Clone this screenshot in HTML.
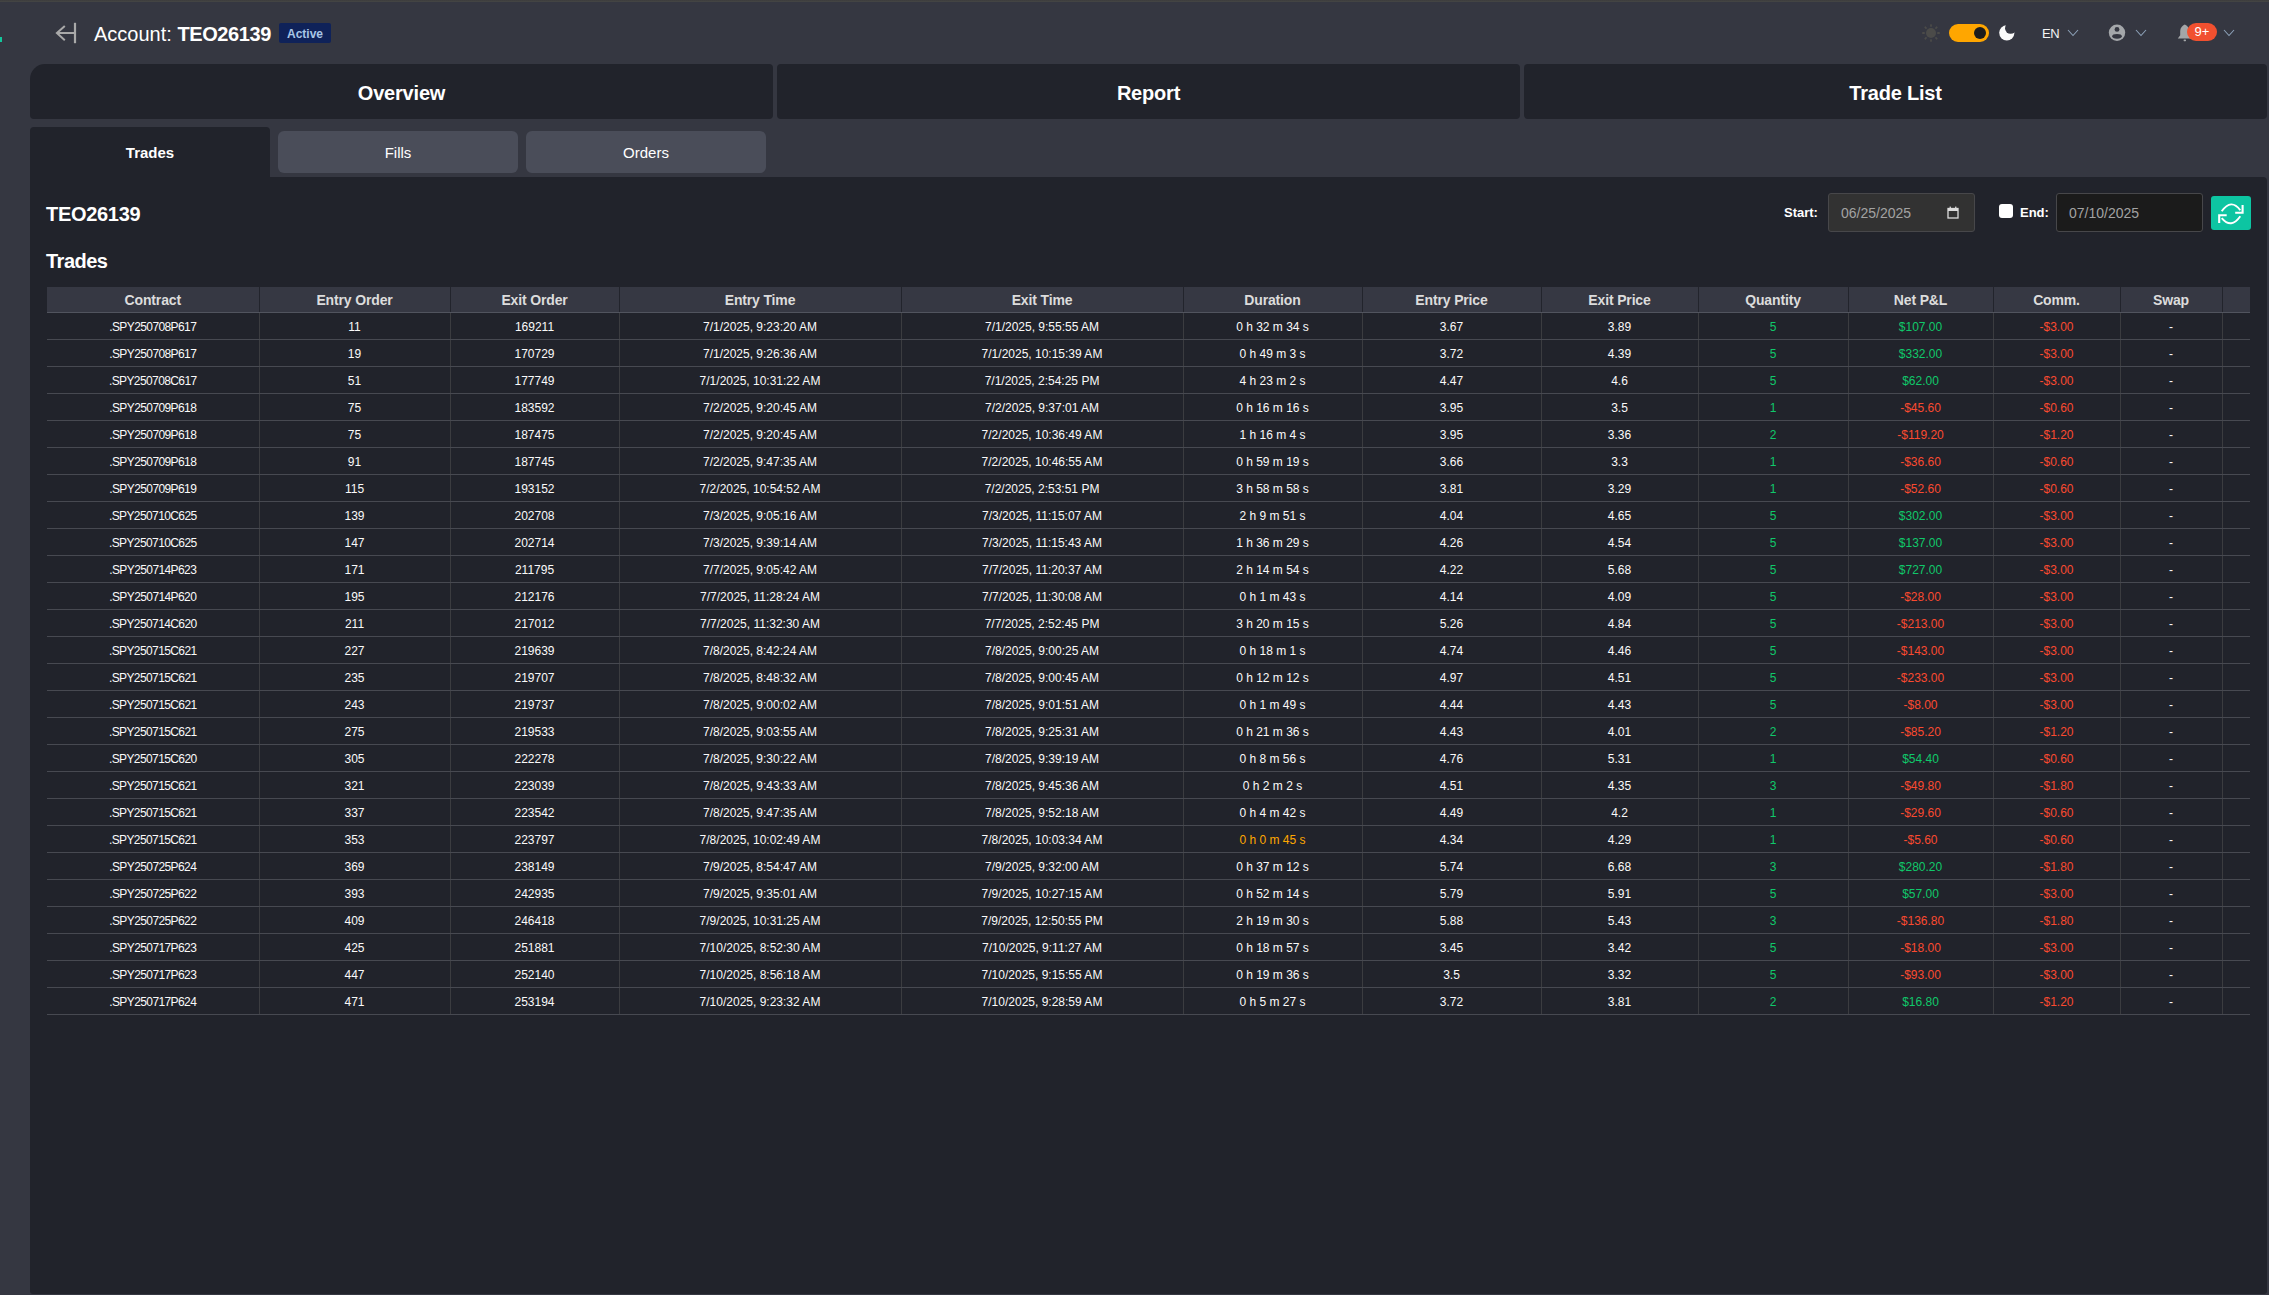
<!DOCTYPE html>
<html>
<head>
<meta charset="utf-8">
<style>
*{box-sizing:border-box;}
html,body{margin:0;padding:0;}
body{width:2269px;height:1295px;overflow:hidden;background:#353741;font-family:"Liberation Sans",sans-serif;color:#fff;position:relative;}
.abs{position:absolute;}
#topline{left:0;top:0;width:2269px;height:2px;background:linear-gradient(#3c3c3c,#454745);}
#greendot{left:0;top:37px;width:2px;height:5px;background:#12c79c;}
#back{left:50px;top:18px;width:30px;height:30px;}
#title{left:94px;top:22px;font-size:20px;line-height:24px;white-space:nowrap;}
#title b{font-weight:bold;letter-spacing:-0.4px;}
#badge{left:279px;top:23px;width:52px;height:20px;background:#0f2259;border-radius:2px;color:#a9c6e6;font-size:12px;font-weight:bold;line-height:20px;padding-top:1px;text-align:center;}
.tab{top:64px;height:55px;background:#21232b;border-radius:4px;font-size:20px;font-weight:bold;text-align:center;line-height:51px;padding-top:4px;letter-spacing:-0.2px;}
#t1{left:30px;width:743px;border-top-left-radius:15px;}
#t2{left:777px;width:743px;}
#t3{left:1524px;width:743px;}
#sub1{left:30px;top:127px;width:240px;height:60px;background:#21232b;border-radius:4px 4px 0 0;font-size:15px;font-weight:bold;text-align:center;line-height:50px;padding-top:1px;}
.sub{top:131px;width:240px;height:42px;background:#4a4d59;border-radius:6px;font-size:15px;text-align:center;line-height:42px;padding-top:1px;color:#fff;}
#sub2{left:278px;}
#sub3{left:526px;}
#content{left:30px;top:177px;width:2237px;height:1117px;background:#21232b;border-radius:0 4px 3px 3px;}
#acct{left:46px;top:202px;font-size:20px;font-weight:bold;line-height:24px;letter-spacing:-0.3px;}
#trh{left:46px;top:249px;font-size:20px;font-weight:bold;line-height:24px;letter-spacing:-0.5px;}
.lbl{font-size:13px;font-weight:bold;line-height:16px;}
#lstart{left:1784px;top:205px;}
#lend{left:2020px;top:205px;}
.inp{top:193px;width:147px;height:39px;border:1px solid #47474a;border-radius:3px;font-size:14px;color:#a2a2a2;line-height:39px;padding-left:12px;}
#in1{left:1828px;background:#323232;}
#in2{left:2056px;background:#1b1b1b;}
#cal{left:1947px;top:206px;width:12px;height:13px;}
#chk{left:1999px;top:204px;width:14px;height:14px;background:#fff;border-radius:3px;}
#refresh{left:2211px;top:196px;width:40px;height:34px;background:#0dc5a2;border-radius:3px;}
#rtline{display:none;}
table{position:absolute;left:47px;top:287px;border-collapse:collapse;table-layout:fixed;width:2203px;}
th{height:25px;background:#363843;color:#dcdcdc;font-size:14px;letter-spacing:-0.15px;font-weight:bold;text-align:center;padding:0;border-left:1px solid #22242c;border-bottom:1px solid #51545e;line-height:24px;padding-top:1px;}
th:first-child{border-left:none;}
td{height:27px;font-size:12px;text-align:center;padding:0;border-left:1px solid #3b3c40;border-bottom:1px solid #474951;color:#fafafa;line-height:24px;padding-top:2px;white-space:nowrap;}
td:first-child{border-left:none;}
td.c{letter-spacing:-0.6px;}
td.g{color:#10c86a;}
td.r{color:#fa4a30;}
td.o{color:#ffa800;}
/* header icons */
#sun{left:1921px;top:23px;width:20px;height:20px;}
#toggle{left:1949px;top:24px;width:40px;height:18px;background:#ffa600;border-radius:9px;}
#knob{left:1974px;top:27px;width:12px;height:12px;background:#1c1c1c;border-radius:50%;}
#moon{left:1998px;top:23px;width:18px;height:18px;}
#en{left:2042px;top:26px;font-size:13px;letter-spacing:-0.5px;line-height:16px;color:#f4f4f4;}
.chev{width:12px;height:8px;top:29px;}
#ch1{left:2067px;}
#ch2{left:2135px;}
#ch3{left:2223px;}
#user{left:2108px;top:24px;width:18px;height:18px;}
#bell{left:2176px;top:24px;width:16px;height:18px;}
#nbadge{left:2187px;top:23px;width:30px;height:18px;background:#f1502f;border-radius:9px;font-size:13px;line-height:18px;text-align:center;color:#fff;}
</style>
</head>
<body>
<div id="topline" class="abs"></div>
<div id="greendot" class="abs"></div>
<svg id="back" class="abs" viewBox="0 0 30 30"><path d="M14.8 8 L6.9 15.1 L14.8 22.2 M7 15.1 H24" fill="none" stroke="#a9a9a9" stroke-width="2"/><path d="M25 4.8 V25.2" stroke="#a9a9a9" stroke-width="2.2"/></svg>
<div id="title" class="abs">Account: <b>TEO26139</b></div>
<div id="badge" class="abs">Active</div>

<svg id="sun" class="abs" viewBox="0 0 20 20"><g fill="#4b4b49"><circle cx="10" cy="10" r="5"/><rect x="9.1" y="1.2" width="1.8" height="2.6" rx="0.5" transform="rotate(0 10 10)"/><rect x="9.1" y="1.2" width="1.8" height="2.6" rx="0.5" transform="rotate(45 10 10)"/><rect x="9.1" y="1.2" width="1.8" height="2.6" rx="0.5" transform="rotate(90 10 10)"/><rect x="9.1" y="1.2" width="1.8" height="2.6" rx="0.5" transform="rotate(135 10 10)"/><rect x="9.1" y="1.2" width="1.8" height="2.6" rx="0.5" transform="rotate(180 10 10)"/><rect x="9.1" y="1.2" width="1.8" height="2.6" rx="0.5" transform="rotate(225 10 10)"/><rect x="9.1" y="1.2" width="1.8" height="2.6" rx="0.5" transform="rotate(270 10 10)"/><rect x="9.1" y="1.2" width="1.8" height="2.6" rx="0.5" transform="rotate(315 10 10)"/></g></svg>
<div id="toggle" class="abs"></div>
<div id="knob" class="abs"></div>
<svg id="moon" class="abs" viewBox="0 0 18 18"><defs><mask id="mm"><rect width="18" height="18" fill="#fff"/><circle cx="12.6" cy="5.2" r="5.6" fill="#000"/></mask></defs><circle cx="8.8" cy="9.8" r="7.6" fill="#fafafa" mask="url(#mm)"/></svg>
<div id="en" class="abs">EN</div>
<svg id="ch1" class="abs chev" viewBox="0 0 12 8"><path d="M1 1 L6 6.5 L11 1" fill="none" stroke="#8ea3ba" stroke-width="1.05"/></svg>
<svg id="user" class="abs" viewBox="0 0 18 18"><circle cx="9" cy="8.8" r="8.2" fill="#a4a7aa"/><circle cx="9" cy="5.4" r="2.4" fill="#353741"/><ellipse cx="9" cy="12.3" rx="4.8" ry="2.4" fill="#353741"/></svg>
<svg id="ch2" class="abs chev" viewBox="0 0 12 8"><path d="M1 1 L6 6.5 L11 1" fill="none" stroke="#8ea3ba" stroke-width="1.05"/></svg>
<svg id="bell" class="abs" viewBox="0 0 16 18"><path d="M8.8 0.6 C6.4 1.8 4.2 3.6 4.2 7 V11.3 L1.8 14.6 H15.8 L13.4 11.3 V7 C13.4 3.6 11.2 1.8 8.8 0.6 Z" fill="#a3a6a8"/><rect x="7.6" y="15.5" width="2.4" height="1.7" rx="0.6" fill="#a3a6a8"/></svg>
<div id="nbadge" class="abs">9+</div>
<svg id="ch3" class="abs chev" viewBox="0 0 12 8"><path d="M1 1 L6 6.5 L11 1" fill="none" stroke="#8ea3ba" stroke-width="1.05"/></svg>

<div id="t1" class="abs tab">Overview</div>
<div id="t2" class="abs tab">Report</div>
<div id="t3" class="abs tab">Trade List</div>

<div id="content" class="abs"></div>
<div id="sub1" class="abs">Trades</div>
<div id="sub2" class="abs sub">Fills</div>
<div id="sub3" class="abs sub">Orders</div>
<div id="rtline" class="abs"></div>

<div id="acct" class="abs">TEO26139</div>
<div id="trh" class="abs">Trades</div>

<div id="lstart" class="abs lbl">Start:</div>
<div id="in1" class="abs inp">06/25/2025</div>
<svg id="cal" class="abs" viewBox="0 0 12 13"><rect x="1" y="2.5" width="10" height="9.5" fill="none" stroke="#dcdcdc" stroke-width="1.3"/><rect x="1" y="2.5" width="10" height="2.5" fill="#dcdcdc"/><rect x="2.6" y="0.6" width="1.3" height="2.5" fill="#dcdcdc"/><rect x="8.1" y="0.6" width="1.3" height="2.5" fill="#dcdcdc"/></svg>
<div id="chk" class="abs"></div>
<div id="lend" class="abs lbl">End:</div>
<div id="in2" class="abs inp">07/10/2025</div>
<div id="refresh" class="abs"><svg width="40" height="34" viewBox="0 0 40 34"><g fill="none" stroke="#fff" stroke-width="1.9"><path d="M10.7 15.3 Q20.3 2 29.3 14.3"/><path d="M29.3 20.3 Q20.3 33.3 10.7 22.1"/><path d="M24.2 16.7 H31.6 V9.1" stroke-width="2.1"/><path d="M15.7 19.2 H8.2 V26.9" stroke-width="2.1"/></g></svg></div>

<table>
<colgroup><col style="width:212px"><col style="width:191px"><col style="width:169px"><col style="width:282px"><col style="width:282px"><col style="width:179px"><col style="width:179px"><col style="width:157px"><col style="width:150px"><col style="width:145px"><col style="width:127px"><col style="width:102px"><col style="width:28px"></colgroup>
<thead><tr><th>Contract</th><th>Entry Order</th><th>Exit Order</th><th>Entry Time</th><th>Exit Time</th><th>Duration</th><th>Entry Price</th><th>Exit Price</th><th>Quantity</th><th>Net P&amp;L</th><th>Comm.</th><th>Swap</th><th></th></tr></thead>
<tbody>
<tr><td class="c">.SPY250708P617</td><td>11</td><td>169211</td><td>7/1/2025, 9:23:20 AM</td><td>7/1/2025, 9:55:55 AM</td><td>0 h 32 m 34 s</td><td>3.67</td><td>3.89</td><td class="g">5</td><td class="g">$107.00</td><td class="r">-$3.00</td><td>-</td><td></td></tr>
<tr><td class="c">.SPY250708P617</td><td>19</td><td>170729</td><td>7/1/2025, 9:26:36 AM</td><td>7/1/2025, 10:15:39 AM</td><td>0 h 49 m 3 s</td><td>3.72</td><td>4.39</td><td class="g">5</td><td class="g">$332.00</td><td class="r">-$3.00</td><td>-</td><td></td></tr>
<tr><td class="c">.SPY250708C617</td><td>51</td><td>177749</td><td>7/1/2025, 10:31:22 AM</td><td>7/1/2025, 2:54:25 PM</td><td>4 h 23 m 2 s</td><td>4.47</td><td>4.6</td><td class="g">5</td><td class="g">$62.00</td><td class="r">-$3.00</td><td>-</td><td></td></tr>
<tr><td class="c">.SPY250709P618</td><td>75</td><td>183592</td><td>7/2/2025, 9:20:45 AM</td><td>7/2/2025, 9:37:01 AM</td><td>0 h 16 m 16 s</td><td>3.95</td><td>3.5</td><td class="g">1</td><td class="r">-$45.60</td><td class="r">-$0.60</td><td>-</td><td></td></tr>
<tr><td class="c">.SPY250709P618</td><td>75</td><td>187475</td><td>7/2/2025, 9:20:45 AM</td><td>7/2/2025, 10:36:49 AM</td><td>1 h 16 m 4 s</td><td>3.95</td><td>3.36</td><td class="g">2</td><td class="r">-$119.20</td><td class="r">-$1.20</td><td>-</td><td></td></tr>
<tr><td class="c">.SPY250709P618</td><td>91</td><td>187745</td><td>7/2/2025, 9:47:35 AM</td><td>7/2/2025, 10:46:55 AM</td><td>0 h 59 m 19 s</td><td>3.66</td><td>3.3</td><td class="g">1</td><td class="r">-$36.60</td><td class="r">-$0.60</td><td>-</td><td></td></tr>
<tr><td class="c">.SPY250709P619</td><td>115</td><td>193152</td><td>7/2/2025, 10:54:52 AM</td><td>7/2/2025, 2:53:51 PM</td><td>3 h 58 m 58 s</td><td>3.81</td><td>3.29</td><td class="g">1</td><td class="r">-$52.60</td><td class="r">-$0.60</td><td>-</td><td></td></tr>
<tr><td class="c">.SPY250710C625</td><td>139</td><td>202708</td><td>7/3/2025, 9:05:16 AM</td><td>7/3/2025, 11:15:07 AM</td><td>2 h 9 m 51 s</td><td>4.04</td><td>4.65</td><td class="g">5</td><td class="g">$302.00</td><td class="r">-$3.00</td><td>-</td><td></td></tr>
<tr><td class="c">.SPY250710C625</td><td>147</td><td>202714</td><td>7/3/2025, 9:39:14 AM</td><td>7/3/2025, 11:15:43 AM</td><td>1 h 36 m 29 s</td><td>4.26</td><td>4.54</td><td class="g">5</td><td class="g">$137.00</td><td class="r">-$3.00</td><td>-</td><td></td></tr>
<tr><td class="c">.SPY250714P623</td><td>171</td><td>211795</td><td>7/7/2025, 9:05:42 AM</td><td>7/7/2025, 11:20:37 AM</td><td>2 h 14 m 54 s</td><td>4.22</td><td>5.68</td><td class="g">5</td><td class="g">$727.00</td><td class="r">-$3.00</td><td>-</td><td></td></tr>
<tr><td class="c">.SPY250714P620</td><td>195</td><td>212176</td><td>7/7/2025, 11:28:24 AM</td><td>7/7/2025, 11:30:08 AM</td><td>0 h 1 m 43 s</td><td>4.14</td><td>4.09</td><td class="g">5</td><td class="r">-$28.00</td><td class="r">-$3.00</td><td>-</td><td></td></tr>
<tr><td class="c">.SPY250714C620</td><td>211</td><td>217012</td><td>7/7/2025, 11:32:30 AM</td><td>7/7/2025, 2:52:45 PM</td><td>3 h 20 m 15 s</td><td>5.26</td><td>4.84</td><td class="g">5</td><td class="r">-$213.00</td><td class="r">-$3.00</td><td>-</td><td></td></tr>
<tr><td class="c">.SPY250715C621</td><td>227</td><td>219639</td><td>7/8/2025, 8:42:24 AM</td><td>7/8/2025, 9:00:25 AM</td><td>0 h 18 m 1 s</td><td>4.74</td><td>4.46</td><td class="g">5</td><td class="r">-$143.00</td><td class="r">-$3.00</td><td>-</td><td></td></tr>
<tr><td class="c">.SPY250715C621</td><td>235</td><td>219707</td><td>7/8/2025, 8:48:32 AM</td><td>7/8/2025, 9:00:45 AM</td><td>0 h 12 m 12 s</td><td>4.97</td><td>4.51</td><td class="g">5</td><td class="r">-$233.00</td><td class="r">-$3.00</td><td>-</td><td></td></tr>
<tr><td class="c">.SPY250715C621</td><td>243</td><td>219737</td><td>7/8/2025, 9:00:02 AM</td><td>7/8/2025, 9:01:51 AM</td><td>0 h 1 m 49 s</td><td>4.44</td><td>4.43</td><td class="g">5</td><td class="r">-$8.00</td><td class="r">-$3.00</td><td>-</td><td></td></tr>
<tr><td class="c">.SPY250715C621</td><td>275</td><td>219533</td><td>7/8/2025, 9:03:55 AM</td><td>7/8/2025, 9:25:31 AM</td><td>0 h 21 m 36 s</td><td>4.43</td><td>4.01</td><td class="g">2</td><td class="r">-$85.20</td><td class="r">-$1.20</td><td>-</td><td></td></tr>
<tr><td class="c">.SPY250715C620</td><td>305</td><td>222278</td><td>7/8/2025, 9:30:22 AM</td><td>7/8/2025, 9:39:19 AM</td><td>0 h 8 m 56 s</td><td>4.76</td><td>5.31</td><td class="g">1</td><td class="g">$54.40</td><td class="r">-$0.60</td><td>-</td><td></td></tr>
<tr><td class="c">.SPY250715C621</td><td>321</td><td>223039</td><td>7/8/2025, 9:43:33 AM</td><td>7/8/2025, 9:45:36 AM</td><td>0 h 2 m 2 s</td><td>4.51</td><td>4.35</td><td class="g">3</td><td class="r">-$49.80</td><td class="r">-$1.80</td><td>-</td><td></td></tr>
<tr><td class="c">.SPY250715C621</td><td>337</td><td>223542</td><td>7/8/2025, 9:47:35 AM</td><td>7/8/2025, 9:52:18 AM</td><td>0 h 4 m 42 s</td><td>4.49</td><td>4.2</td><td class="g">1</td><td class="r">-$29.60</td><td class="r">-$0.60</td><td>-</td><td></td></tr>
<tr><td class="c">.SPY250715C621</td><td>353</td><td>223797</td><td>7/8/2025, 10:02:49 AM</td><td>7/8/2025, 10:03:34 AM</td><td class="o">0 h 0 m 45 s</td><td>4.34</td><td>4.29</td><td class="g">1</td><td class="r">-$5.60</td><td class="r">-$0.60</td><td>-</td><td></td></tr>
<tr><td class="c">.SPY250725P624</td><td>369</td><td>238149</td><td>7/9/2025, 8:54:47 AM</td><td>7/9/2025, 9:32:00 AM</td><td>0 h 37 m 12 s</td><td>5.74</td><td>6.68</td><td class="g">3</td><td class="g">$280.20</td><td class="r">-$1.80</td><td>-</td><td></td></tr>
<tr><td class="c">.SPY250725P622</td><td>393</td><td>242935</td><td>7/9/2025, 9:35:01 AM</td><td>7/9/2025, 10:27:15 AM</td><td>0 h 52 m 14 s</td><td>5.79</td><td>5.91</td><td class="g">5</td><td class="g">$57.00</td><td class="r">-$3.00</td><td>-</td><td></td></tr>
<tr><td class="c">.SPY250725P622</td><td>409</td><td>246418</td><td>7/9/2025, 10:31:25 AM</td><td>7/9/2025, 12:50:55 PM</td><td>2 h 19 m 30 s</td><td>5.88</td><td>5.43</td><td class="g">3</td><td class="r">-$136.80</td><td class="r">-$1.80</td><td>-</td><td></td></tr>
<tr><td class="c">.SPY250717P623</td><td>425</td><td>251881</td><td>7/10/2025, 8:52:30 AM</td><td>7/10/2025, 9:11:27 AM</td><td>0 h 18 m 57 s</td><td>3.45</td><td>3.42</td><td class="g">5</td><td class="r">-$18.00</td><td class="r">-$3.00</td><td>-</td><td></td></tr>
<tr><td class="c">.SPY250717P623</td><td>447</td><td>252140</td><td>7/10/2025, 8:56:18 AM</td><td>7/10/2025, 9:15:55 AM</td><td>0 h 19 m 36 s</td><td>3.5</td><td>3.32</td><td class="g">5</td><td class="r">-$93.00</td><td class="r">-$3.00</td><td>-</td><td></td></tr>
<tr><td class="c">.SPY250717P624</td><td>471</td><td>253194</td><td>7/10/2025, 9:23:32 AM</td><td>7/10/2025, 9:28:59 AM</td><td>0 h 5 m 27 s</td><td>3.72</td><td>3.81</td><td class="g">2</td><td class="g">$16.80</td><td class="r">-$1.20</td><td>-</td><td></td></tr>
</tbody>
</table>
</body>
</html>
